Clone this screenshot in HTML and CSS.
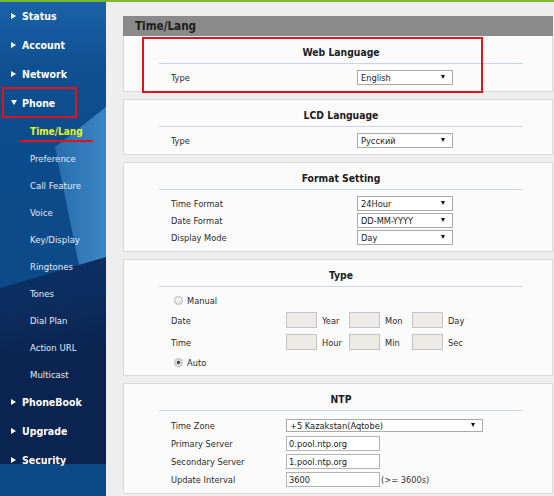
FILE: index.html
```html
<!DOCTYPE html>
<html>
<head>
    <meta charset="utf-8">
    <title>Time/Lang</title>
    <link rel="stylesheet" href="styles.css">
</head>
<body>
<div class="topbar"></div>
<div class="layout">
    <div class="sidebar">
        <ul class="menu">
            <li class="m-item"><span class="arr"></span>Status</li>
            <li class="m-item"><span class="arr"></span>Account</li>
            <li class="m-item"><span class="arr"></span>Network</li>
            <li class="m-item open mark"><span class="arr"></span>Phone</li>
            <li class="sub">
                <ul>
                    <li class="cur">Time/Lang</li>
                    <li>Preference</li>
                    <li>Call Feature</li>
                    <li>Voice</li>
                    <li>Key/Display</li>
                    <li>Ringtones</li>
                    <li>Tones</li>
                    <li>Dial Plan</li>
                    <li>Action URL</li>
                    <li>Multicast</li>
                </ul>
            </li>
            <li class="m-item"><span class="arr"></span>PhoneBook</li>
            <li class="m-item"><span class="arr"></span>Upgrade</li>
            <li class="m-item"><span class="arr"></span>Security</li>
        </ul>
    </div>

    <div class="main">
        <div class="page-title">Time/Lang</div>

        <div class="panel mark">
            <div class="inner">
                <h3>Web Language</h3>
                <div class="rows">
                    <div class="row">
                        <label>Type</label>
                        <span class="sel"><select><option>English</option></select></span>
                    </div>
                </div>
            </div>
        </div>

        <div class="panel">
            <div class="inner">
                <h3>LCD Language</h3>
                <div class="rows">
                    <div class="row">
                        <label>Type</label>
                        <span class="sel"><select><option>Русский</option></select></span>
                    </div>
                </div>
            </div>
        </div>

        <div class="panel">
            <div class="inner">
                <h3>Format Setting</h3>
                <div class="rows">
                    <div class="row">
                        <label>Time Format</label>
                        <span class="sel"><select><option>24Hour</option></select></span>
                    </div>
                    <div class="row">
                        <label>Date Format</label>
                        <span class="sel"><select><option>DD-MM-YYYY</option></select></span>
                    </div>
                    <div class="row">
                        <label>Display Mode</label>
                        <span class="sel"><select><option>Day</option></select></span>
                    </div>
                </div>
            </div>
        </div>

        <div class="panel p-type">
            <div class="inner">
                <h3>Type</h3>
                <div class="rows">
                    <div class="row r-radio">
                        <input type="radio" name="mode" id="m1"><label for="m1">Manual</label>
                    </div>
                    <div class="row r-date">
                        <label>Date</label>
                        <span class="grp"><input type="text" disabled><span>Year</span></span>
                        <span class="grp"><input type="text" disabled><span>Mon</span></span>
                        <span class="grp"><input type="text" disabled><span>Day</span></span>
                    </div>
                    <div class="row r-date">
                        <label>Time</label>
                        <span class="grp"><input type="text" disabled><span>Hour</span></span>
                        <span class="grp"><input type="text" disabled><span>Min</span></span>
                        <span class="grp"><input type="text" disabled><span>Sec</span></span>
                    </div>
                    <div class="row r-radio">
                        <input type="radio" name="mode" id="m2" checked><label for="m2">Auto</label>
                    </div>
                </div>
            </div>
        </div>

        <div class="panel p-ntp">
            <div class="inner">
                <h3>NTP</h3>
                <div class="rows">
                    <div class="row">
                        <label>Time Zone</label>
                        <span class="sel wide"><select><option>+5 Kazakstan(Aqtobe)</option></select></span>
                    </div>
                    <div class="row">
                        <label>Primary Server</label>
                        <input type="text" class="txt" value="0.pool.ntp.org">
                    </div>
                    <div class="row">
                        <label>Secondary Server</label>
                        <input type="text" class="txt" value="1.pool.ntp.org">
                    </div>
                    <div class="row">
                        <label>Update Interval</label>
                        <input type="text" class="txt" value="3600"><span class="hint">(&gt;= 3600s)</span>
                    </div>
                </div>
            </div>
        </div>
    </div>
</div>
</body>
</html>
```

FILE: styles.css
```css
html, body{
    margin: 0;
    padding: 0;
    height: 100%;
}
body{
    background: #eeeeee;
    font-family: "DejaVu Sans Condensed", "DejaVu Sans", sans-serif;
    overflow: hidden;
}
ul{ margin: 0; padding: 0; list-style: none;}

.topbar{
    height: 2px;
    background: #7cb928;
}
.layout{
    display: flex;
    height: 494px;
}

/* 左侧菜单 */
.sidebar{
    position: relative;
    width: 106px;
    flex: none;
    overflow: hidden;
    background: linear-gradient(to bottom, #1a62a8 0, #0e4f90 70px, #0c4a8a 200px, #0c4a8a 100%);
}
.sidebar::before,
.sidebar::after{
    content: "";
    position: absolute;
    left: 0; top: 0; right: 0; bottom: 0;
}
/* 浅色斜条 */
.sidebar::before{
    background: linear-gradient(to right, rgba(40,110,175,0) 0, rgba(45,115,180,.7) 40%, #3b86c6 100%);
    clip-path: polygon(55px 145px, 106px 105px, 106px 262px, 80px 268px);
}
/* 深色底部 */
.sidebar::after{
    background:
        linear-gradient(to bottom, transparent 462px, #0c4a87 462px),
        linear-gradient(170deg, #0d3a72 0, #0c2d5f 300px, #0b2451 360px, #0b2350 100%);
    clip-path: polygon(0 286px, 106px 255px, 106px 494px, 0 494px);
}
.menu{
    position: relative;
    z-index: 1;
}
.m-item{
    position: relative;
    height: 29px;
    line-height: 29px;
    padding-left: 11px;
    color: #fff;
    font-weight: bold;
    font-size: 10.5px;
    white-space: nowrap;
}
.m-item .arr{
    display: inline-block;
    width: 0; height: 0;
    margin-right: 6px;
    border-left: 5px solid #fff;
    border-top: 3px solid transparent;
    border-bottom: 3px solid transparent;
    vertical-align: 1px;
}
.m-item.open .arr{
    margin-right: 5px;
    border-left: 3px solid transparent;
    border-right: 3px solid transparent;
    border-top: 5px solid #fff;
    border-bottom: 0;
    vertical-align: 2px;
}
.m-item.mark::after{
    content: "";
    position: absolute;
    left: 2px; top: -2px;
    width: 75px; height: 31px;
    box-sizing: border-box;
    border: 2px solid #e5121a;
}
.sub li{
    position: relative;
    height: 27px;
    line-height: 27px;
    padding-left: 30px;
    color: #e4ecf5;
    font-size: 9.5px;
    white-space: nowrap;
}
.sub li.cur{
    color: #e1f31d;
    font-weight: bold;
    font-size: 10px;
}
.sub li.cur::after{
    content: "";
    position: absolute;
    left: 20px; top: 22px;
    width: 73px; height: 2px;
    background: #e5121a;
}

/* 右侧内容 */
.main{
    flex: 1;
    padding: 14px 1px 0 17px;
    border-left: 4px solid #e4e4e4;
    margin-left: -4px;
}
.page-title{
    height: 20px;
    line-height: 20px;
    padding-left: 12px;
    background: #8a8a8a;
    color: #1c1c1c;
    font-weight: bold;
    font-size: 11.6px;
}
.panel{
    position: relative;
    margin-bottom: 7px;
    background: #fbfbfc;
    border: 1px solid #dadada;
}
.panel.mark{ border-top: 0;}
.panel.mark::after{
    content: "";
    position: absolute;
    left: 18px; top: 1px;
    width: 341px; height: 56px;
    box-sizing: border-box;
    border: 2px solid #e5121a;
}
.inner{
    width: 364px;
    margin-left: 35px;
}
.inner h3{
    margin: 0;
    padding-top: 4px;
    height: 22px;
    line-height: 22px;
    text-align: center;
    font-size: 10.3px;
    font-weight: bold;
    color: #1c1c1c;
    border-bottom: 1px solid #c9d5e8;
}
.panel.mark .inner h3{ padding-top: 5px;}
.rows{ padding: 5px 0 5px 12px;}
.row{
    display: flex;
    align-items: center;
    height: 17px;
    font-size: 9.2px;
    color: #2a2a2a;
}
.row > label{
    width: 186px;
    flex: none;
}

.sel{
    position: relative;
    display: inline-block;
    width: 96px; height: 15px;
}
.sel select{
    -webkit-appearance: none;
    appearance: none;
    width: 100%; height: 100%;
    margin: 0;
    padding: 0 0 0 3px;
    box-sizing: border-box;
    border: 1px solid #a9a9a9;
    border-radius: 0;
    background: #fff;
    font-family: "DejaVu Sans Condensed", "DejaVu Sans", sans-serif;
    font-size: 9.2px;
    color: #222;
    outline: none;
}
.sel::after{
    content: "";
    position: absolute;
    right: 8px; top: 5px;
    border-left: 2.5px solid transparent;
    border-right: 2.5px solid transparent;
    border-top: 4px solid #111;
    pointer-events: none;
}
.sel.wide{ width: 197px; height: 13px;}
.sel.wide::after{ top: 4px;}

/* Type 面板 */
.p-type .rows{ padding: 4px 0 4px 12px;}
.p-type .row > label,
.p-ntp .row > label{ width: 115px;}
.r-radio{ height: 18px; padding-left: 3px;}
.r-radio > label{ width: auto;}
.r-date{ height: 22px;}
.row input[type=radio]{
    -webkit-appearance: none;
    appearance: none;
    width: 9px; height: 9px;
    margin: 0 4px 0 0;
    border: 1px solid #b9b9b9;
    border-radius: 50%;
    background: radial-gradient(circle at 40% 35%, #fafafa, #d9d9d9);
    box-sizing: border-box;
}
.row input[type=radio]:checked{
    background: radial-gradient(circle, #555 0, #555 1.6px, #e6e6e6 2.2px, #d4d4d4 100%);
}
.grp{
    display: flex;
    align-items: center;
    width: 63px;
    flex: none;
}
.grp input{
    width: 31px; height: 16px;
    margin: 0 5px 0 0;
    padding: 0;
    box-sizing: border-box;
    border: 1px solid #c4c4c4;
    background: #edebe5;
}

/* NTP 面板 */
.p-ntp .row{ height: 18px;}
.txt{
    width: 94px; height: 15px;
    margin: 0;
    padding: 0 0 0 2px;
    box-sizing: border-box;
    border: 1px solid #b4b4b4;
    background: #fff;
    font-family: "DejaVu Sans Condensed", "DejaVu Sans", sans-serif;
    font-size: 9.2px;
    color: #222;
    outline: none;
}
.hint{ margin-left: 1px; color: #333;}
```
